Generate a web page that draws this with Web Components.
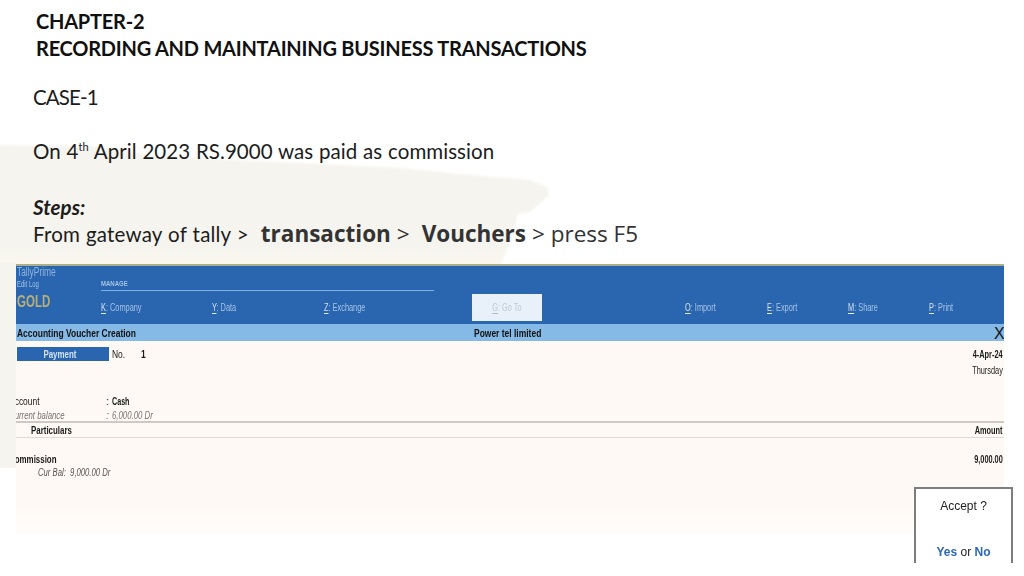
<!DOCTYPE html>
<html>
<head>
<meta charset="utf-8">
<title>Chapter 2</title>
<style>
  html, body { margin: 0; height: 100%; background: #fff; }
  body { font-family: "Lato", "Liberation Sans", sans-serif; overflow: hidden; }
</style>
</head>
<body>
<slide-page>
  <slide-heading>
    <span>CHAPTER-2</span>
    <span>RECORDING AND MAINTAINING BUSINESS TRANSACTIONS</span>
  </slide-heading>
  <case-text></case-text>
  <tally-window>
    <tally-topbar></tally-topbar>
    <tally-voucher></tally-voucher>
  </tally-window>
  <accept-box></accept-box>
</slide-page>

<script>
// page frame, the paint stroke sits behind everything
class SlidePage extends HTMLElement {
  connectedCallback() {
    if (this.shadowRoot) return;
    const shadow = this.attachShadow({ mode: "open" });
    shadow.innerHTML = `
      <style>
        :host {
          display: flex;
          flex-direction: column;
          position: relative;
          width: 1024px;
          height: 576px;
          overflow: hidden;
          background: #fff;
        }
        svg {
          position: absolute;
          left: 0;
          top: 0;
          z-index: 0;
        }
        .content {
          position: relative;
          z-index: 1;
          display: flex;
          flex-direction: column;
          height: 100%;
        }
      </style>
      <svg width="1024" height="576" viewBox="0 0 1024 576">
        <defs>
          <filter id="soft"><feGaussianBlur stdDeviation="1.2"/></filter>
          <linearGradient id="stroke" x1="0" y1="0" x2="0" y2="1">
            <stop offset="0.85" stop-color="#f5f4ee"/>
            <stop offset="1" stop-color="#fcf8f0"/>
          </linearGradient>
        </defs>
        <path fill="url(#stroke)" filter="url(#soft)" d="M-5 145 L90 146 L150 155 L230 160 L300 163 L400 168 L470 175 L530 180 L547 187 L549 195 L540 203 L530 212 L518 214 L512 238 L500 266 L-5 266 Z"/>
        <rect x="0" y="262" width="17" height="206" fill="#f5f4ee"/>
      </svg>
      <div class="content"><slot></slot></div>
    `;
  }
}

class SlideHeading extends HTMLElement {
  connectedCallback() {
    if (this.shadowRoot) return;
    const shadow = this.attachShadow({ mode: "open" });
    shadow.innerHTML = `
      <style>
        :host {
          display: flex;
          flex-direction: column;
          padding: 8px 0 0 36px;
          font-size: 20px;
          line-height: 27px;
          font-weight: 700;
          color: #111;
          letter-spacing: -0.23px;
        }
        ::slotted(span) { display: block; }
      </style>
      <slot></slot>
    `;
  }
}

class CaseText extends HTMLElement {
  connectedCallback() {
    if (this.shadowRoot) return;
    const shadow = this.attachShadow({ mode: "open" });
    shadow.innerHTML = `
      <style>
        :host {
          display: block;
          padding: 22px 0 0 33px;
          height: 200px;
          box-sizing: border-box;
          font-size: 20.5px;
          line-height: 27.3px;
          color: #1c1c1c;
          letter-spacing: 0.05px;
          word-spacing: 0.5px;
        }
        p { margin: 0; white-space: pre; }
        .caps { letter-spacing: -0.9px; }
        .gap { height: 26.5px; }
        .gap.second { height: 28.5px; }
        sup { font-size: 11px; line-height: 0; }
        i { font-weight: 700; }
        .from { letter-spacing: 0.2px; margin-top: -1px; }
        .os { font-family: "Open Sans", sans-serif; color: #333; font-size: 22.5px; letter-spacing: 0; word-spacing: 0; }
        b.os { font-weight: 700; }
      </style>
      <p class="caps">CASE-1</p>
      <div class="gap"></div>
      <p>On 4<sup>th</sup> April 2023 RS.9000 was paid as commission</p>
      <div class="gap second"></div>
      <p><i>Steps:</i></p>
      <p class="from">From gateway of tally &gt;  <b class="os">transaction</b> <span class="os">&gt;</span>  <b class="os">Vouchers</b> <span class="os">&gt; press F5</span></p>
    `;
  }
}

class TallyWindow extends HTMLElement {
  connectedCallback() {
    if (this.shadowRoot) return;
    const shadow = this.attachShadow({ mode: "open" });
    shadow.innerHTML = `
      <style>
        :host {
          display: flex;
          flex-direction: column;
          width: 988px;
          height: 270px;
          margin: 2px 0 0 16px;
          overflow: hidden;
          background: linear-gradient(#fef9f4 90%, #fffdfb);
          font-family: "Liberation Sans", sans-serif;
          color: #1a1a1a;
        }
      </style>
      <slot></slot>
    `;
  }
}

// narrow label, the tally font is condensed so the text gets squeezed
class TallyText extends HTMLElement {
  connectedCallback() {
    if (this.shadowRoot) return;
    const shadow = this.attachShadow({ mode: "open" });
    // no whitespace in here: the host is white-space: pre
    shadow.innerHTML = `<style>:host {
      display: inline-block;
      white-space: pre;
      transform: scaleX(var(--sx, 0.77));
      transform-origin: var(--origin, left) center;
      filter: blur(0.35px);
    }</style><slot></slot>`;
  }
}

class TallyTopbar extends HTMLElement {
  connectedCallback() {
    if (this.shadowRoot) return;
    const items = [
      ["K", "Company", 111],
      ["Y", "Data", 112],
      ["Z", "Exchange", 148]
    ];
    const right = [
      ["O", "Import", 82],
      ["E", "Export", 81],
      ["M", "Share", 81],
      ["P", "Print", 60]
    ];
    const cell = ([key, label, w]) =>
      `<div class="item" style="width:${w}px"><tally-text><u>${key}</u>: ${label}</tally-text></div>`;
    const shadow = this.attachShadow({ mode: "open" });
    shadow.innerHTML = `
      <style>
        :host {
          display: flex;
          flex-direction: column;
          flex: none;
          height: 60px;
          box-sizing: border-box;
          background: #2a66b0;
          border-top: 2px solid #a9b08c;
          color: #a6c2e3;
          --sx: 0.67;
        }
        .brand {
          display: grid;
          grid-template-columns: 85px 333px;
          height: 28px;
        }
        .left {
          display: flex;
          flex-direction: column;
          align-items: flex-start;
          padding: 0 0 0 1px;
          font-size: 12px;
          line-height: 12px;
          color: #8fb2dc;
          --sx: 0.7;
        }
        .small { font-size: 8.5px; line-height: 12px; color: #a6c2e3; }
        .manage {
          align-self: end;
          height: 10px;
          margin-bottom: 3px;
          padding-bottom: 1px;
          border-bottom: 1px solid #7fb0e2;
          font-size: 7.5px;
          line-height: 10px;
          font-weight: 700;
          --sx: 0.8;
        }
        .row {
          display: flex;
          align-items: flex-start;
          height: 30px;
        }
        .gold {
          width: 85px;
          margin-top: -1px;
          font-size: 16px;
          line-height: 18px;
          font-weight: 700;
          color: #b9ae78;
          padding-left: 1px;
          box-sizing: border-box;
          --sx: 0.72;
        }
        .item {
          flex: none;
          font-size: 11px;
          line-height: 14px;
          padding-top: 6px;
        }
        u { color: #d3e0ef; text-decoration-color: #e2ebf6; text-underline-offset: 2px; }
        .goto {
          flex: none;
          width: 70px;
          height: 27px;
          margin-right: 143px;
          background: #e8f1fa;
          color: #bcc8d4;
          font-size: 11px;
          line-height: 27px;
          text-align: center;
          --origin: center;
        }
        .goto u { color: #bcc8d4; text-decoration-color: #aab8c6; }
      </style>
      <div class="brand">
        <div class="left"><tally-text>TallyPrime</tally-text><tally-text class="small">Edit Log</tally-text></div>
        <div class="manage"><tally-text>MANAGE</tally-text></div>
      </div>
      <div class="row">
        <div class="gold"><tally-text>GOLD</tally-text></div>
        ${items.map(cell).join("")}
        <div class="goto"><tally-text><u>G</u>: Go To</tally-text></div>
        ${right.map(cell).join("")}
      </div>
    `;
  }
}

class TallyVoucher extends HTMLElement {
  connectedCallback() {
    if (this.shadowRoot) return;
    const shadow = this.attachShadow({ mode: "open" });
    shadow.innerHTML = `
      <style>
        :host {
          display: flex;
          flex-direction: column;
          flex: 1;
          font-size: 11px;
          line-height: 14px;
        }
        b { font-weight: 700; }
        .title {
          display: grid;
          grid-template-columns: 457px 1fr 10px;
          align-items: center;
          height: 17px;
          flex: none;
          background: #85b9e6;
          padding-left: 1px;
          font-weight: 700;
          color: #111;
        }
        .close {
          font-size: 16px;
          font-weight: 400;
          line-height: 17px;
          padding-top: 1px;
        }
        .head {
          display: flex;
          justify-content: space-between;
          padding: 6px 1px 0 1px;
          height: 47px;
          flex: none;
        }
        .kind { display: flex; align-items: flex-start; }
        .pay {
          width: 92px;
          height: 14px;
          box-sizing: border-box;
          padding-right: 6px;
          background: #2a66b0;
          color: #d3e2f3;
          font-weight: 700;
          text-align: center;
          --origin: center;
          --sx: 0.72;
          margin-right: 3px;
        }
        .num { margin-left: 17px; font-weight: 700; }
        .no { width: 12px; }
        .date {
          display: flex;
          flex-direction: column;
          align-items: flex-end;
          margin-top: -1px;
          --origin: right;
          --sx: 0.67;
          line-height: 16px;
        }
        .info {
          display: grid;
          grid-template-columns: 97px 6px 1fr;
          height: 27px;
          flex: none;
          line-height: 14px;
          margin-left: -7px;
        }
        .cash { --sx: 0.65; }
        .muted { color: #77736d; font-style: italic; --sx: 0.71; }
        .lines {
          display: flex;
          justify-content: space-between;
          align-items: center;
          height: 14px;
          flex: none;
          border-top: 2px solid #cdcac4;
          border-bottom: 1px solid #dedbd5;
          padding: 0 1px 0 15px;
          font-weight: 700;
          --origin: right;
          --sx: 0.67;
        }
        .lines tally-text:first-child { --origin: left; --sx: 0.72; }
        .entry {
          display: flex;
          justify-content: space-between;
          padding: 14px 1px 0 0;
          font-weight: 700;
          --origin: right;
          --sx: 0.67;
        }
        .entry tally-text:first-child { --origin: left; --sx: 0.72; margin-left: -7px; }
        .bal { margin-top: -1px; padding: 0 0 0 22px; color: #55524d; font-style: italic; --sx: 0.7; }
      </style>
      <div class="title">
        <div><tally-text>Accounting Voucher Creation</tally-text></div>
        <div><tally-text>Power tel limited</tally-text></div>
        <div class="close">X</div>
      </div>
      <div class="head">
        <div class="kind">
          <div class="pay"><tally-text>Payment</tally-text></div>
          <div class="no"><tally-text>No.</tally-text></div>
          <div class="num"><tally-text>1</tally-text></div>
        </div>
        <div class="date">
          <b><tally-text>4-Apr-24</tally-text></b>
          <tally-text>Thursday</tally-text>
        </div>
      </div>
      <div class="info">
        <div><tally-text>Account</tally-text></div>
        <div>:</div>
        <div class="cash"><b><tally-text>Cash</tally-text></b></div>
        <div class="muted"><tally-text>Current balance</tally-text></div>
        <div class="muted">:</div>
        <div class="muted"><tally-text>6,000.00 Dr</tally-text></div>
      </div>
      <div class="lines">
        <tally-text>Particulars</tally-text>
        <tally-text>Amount</tally-text>
      </div>
      <div class="entry">
        <tally-text>Commission</tally-text>
        <tally-text>9,000.00</tally-text>
      </div>
      <div class="bal"><tally-text>Cur Bal:  9,000.00 Dr</tally-text></div>
    `;
  }
}

class AcceptBox extends HTMLElement {
  connectedCallback() {
    if (this.shadowRoot) return;
    const shadow = this.attachShadow({ mode: "open" });
    shadow.innerHTML = `
      <style>
        :host {
          position: absolute;
          left: 914px;
          top: 487px;
          width: 99px;
          height: 76px;
          box-sizing: border-box;
          display: flex;
          flex-direction: column;
          justify-content: space-between;
          align-items: center;
          padding: 10px 0 4px;
          background: #fff;
          border: 2px solid #7d7d7d;
          border-bottom: 0;
          font-family: "Liberation Sans", sans-serif;
          font-size: 12px;
          line-height: 14px;
          color: #222;
          filter: blur(0.3px);
        }
        b { color: #2f69b3; }
      </style>
      <div>Accept ?</div>
      <div><b>Yes</b> or <b>No</b></div>
    `;
  }
}

customElements.define("slide-page", SlidePage);
customElements.define("slide-heading", SlideHeading);
customElements.define("case-text", CaseText);
customElements.define("tally-window", TallyWindow);
customElements.define("tally-text", TallyText);
customElements.define("tally-topbar", TallyTopbar);
customElements.define("tally-voucher", TallyVoucher);
customElements.define("accept-box", AcceptBox);
</script>
</body>
</html>
